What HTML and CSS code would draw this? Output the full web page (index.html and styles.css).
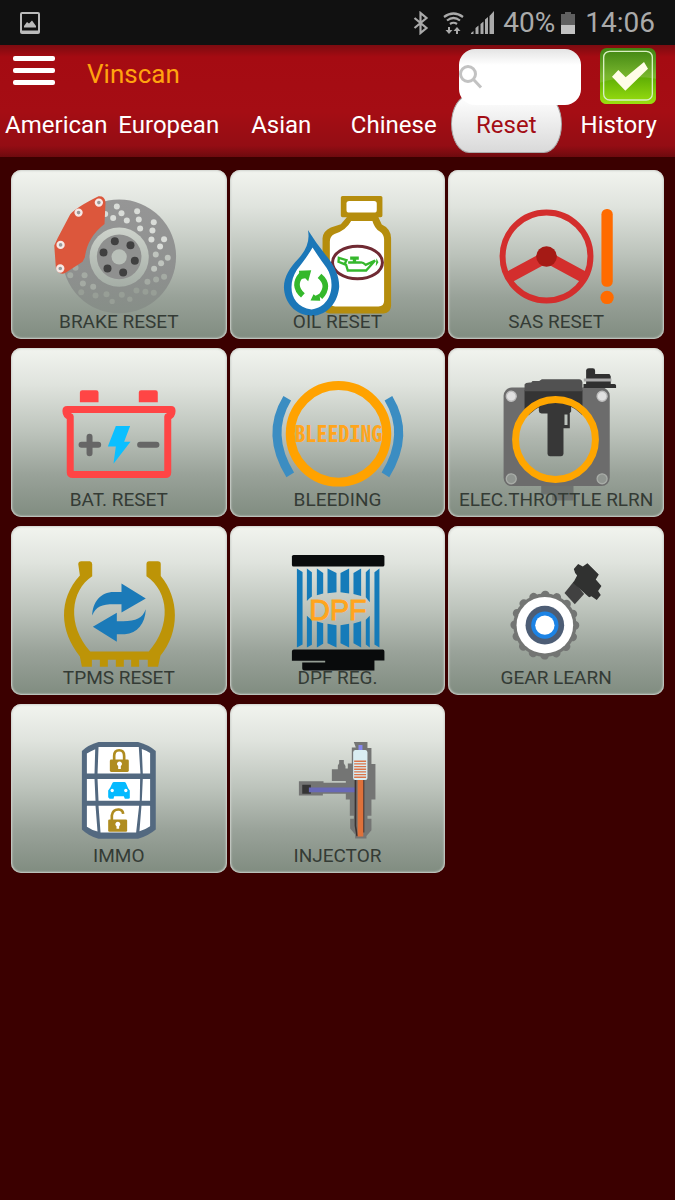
FILE: index.html
```html
<!DOCTYPE html>
<html lang="en">
<head>
<meta charset="utf-8">
<meta name="viewport" content="width=device-width, initial-scale=1">
<title>Vinscan</title>
<link rel="stylesheet" href="styles.css">
</head>
<body>
<div class="status">
  <svg class="status-photo" viewBox="0 0 20 22" aria-hidden="true"><rect x="1" y="1" width="18" height="20" rx="1" fill="none" stroke="#bbb" stroke-width="2"/><path d="M1 18.5h18V21H1z" fill="#bbb"/><path d="M4 15.500l0-1.500 3-4 2 1.500 3-3 4 5.500v1.500z" fill="#bbb"/></svg>
  <svg class="status-signals" viewBox="0 0 82 24" aria-hidden="true">
    <path d="M1.500 7l12 10-6 5V2l6 5-12 10" fill="none" stroke="#aaa" stroke-width="2.200"/>
    <g fill="none" stroke="#aaa" stroke-width="2.200"><path d="M31 6q9.500-7 19 0M34 9.500q6.500-5 13 0M37 13q3.500-2.500 7 0"/><path d="M36 16v5M44 23v-5" stroke-width="2"/></g>
    <path d="M32.500 19h7L36 23zM40.500 20h7L44 16z" fill="#aaa"/>
    <path d="M58 23v-1l2.500-2v3zM62.500 23v-6l3-2.500V23zM67.500 23V13l3-2.500V23zM72 23V8.500L75 6v17zM76.500 23V5L81 0v23z" fill="#aaa"/>
  </svg>
  <span>40%</span>
  <svg class="status-battery" viewBox="0 0 16 24" aria-hidden="true"><path d="M1 3h4V1h6v2h4v20H1z" fill="#606060"/><path d="M1 14h14v9H1z" fill="#c2c2c2"/></svg>
  <time>14:06</time>
</div>

<header class="header">
  <div class="toolbar">
    <button class="menu" type="button" aria-label="Menu"><span></span><span></span><span></span></button>
    <h1>Vinscan</h1>
    <label class="search">
      <svg viewBox="0 0 24 26" aria-hidden="true"><circle cx="9" cy="10" r="7.500" fill="none" stroke="#c2c2c2" stroke-width="3"/><path d="M14.500 15.500l7.500 8" stroke="#c2c2c2" stroke-width="3"/></svg>
      <input type="search" aria-label="Search">
    </label>
    <button class="confirm" type="button" aria-label="Confirm">
      <svg viewBox="0 0 168 168" aria-hidden="true">
        <defs><linearGradient id="ok" x2="0" y2="1"><stop offset="0" stop-color="#3f8411"/><stop offset=".5" stop-color="#78b52d"/><stop offset="1" stop-color="#8bd20c"/></linearGradient>
        <linearGradient id="ok-low" x2="0" y2="1"><stop offset="0" stop-color="#5fae05"/><stop offset="1" stop-color="#9be010"/></linearGradient></defs>
        <rect width="168" height="168" rx="20" fill="url(#ok)"/>
        <path d="M0 104Q80 80 168 92v56q0 20-20 20H20Q0 168 0 148z" fill="url(#ok-low)"/>
        <rect x="11" y="10" width="146" height="146" rx="18" fill="none" stroke="#d9efc3" stroke-width="4"/>
        <path d="M36 86l19-20 22 22 55-46 12 20-68 66z" fill="#fffde8"/>
      </svg>
    </button>
  </div>
  <nav class="tabs" aria-label="Vehicle groups">
    <button type="button">American</button>
    <button type="button">European</button>
    <button type="button">Asian</button>
    <button type="button">Chinese</button>
    <button type="button" class="active" aria-current="page">Reset</button>
    <button type="button">History</button>
  </nav>
</header>

<main class="grid">
  <button class="card" type="button">
    <svg viewBox="18 15 648 508" aria-hidden="true">
      <defs><linearGradient id="disc" x2="0" y2="1"><stop offset="0" stop-color="#969696"/><stop offset=".65" stop-color="#8e908f"/><stop offset="1" stop-color="#868e87"/></linearGradient>
      <linearGradient id="ring" x2="0" y2="1"><stop offset="0" stop-color="#ced3cc"/><stop offset="1" stop-color="#a5aea6"/></linearGradient></defs>
      <circle cx="343" cy="275" r="171" fill="url(#disc)"/>
      <circle cx="343" cy="277" r="89" fill="url(#ring)"/><circle cx="343" cy="276" r="67" fill="#8f908f"/><circle cx="343" cy="276" r="23" fill="#b9c0b9"/>
      <g fill="#404040"><circle cx="330" cy="229" r="12"/><circle cx="377" cy="241" r="12"/><circle cx="390" cy="288" r="12"/><circle cx="355" cy="323" r="12"/><circle cx="308" cy="311" r="12"/><circle cx="296" cy="263" r="12"/></g>
      <g fill="#d9dcd8"><circle cx="336" cy="125" r="9"/><circle cx="350" cy="145" r="9"/><circle cx="325" cy="159" r="9"/><circle cx="301" cy="147" r="9"/><circle cx="397" cy="139" r="9"/><circle cx="402" cy="164" r="9"/><circle cx="366" cy="167" r="9"/><circle cx="406" cy="191" r="9"/><circle cx="447" cy="172" r="9"/><circle cx="443" cy="197" r="9"/><circle cx="440" cy="224" r="9"/><circle cx="478" cy="223" r="9"/><circle cx="466" cy="245" r="9"/></g>
      <g fill="#bfc4be"><circle cx="453" cy="269" r="9"/><circle cx="489" cy="279" r="9"/><circle cx="469" cy="295" r="9"/><circle cx="448" cy="312" r="9"/></g>
      <g fill="#a4aaa3"><circle cx="478" cy="336" r="9"/><circle cx="454" cy="344" r="9"/><circle cx="428" cy="351" r="9"/><circle cx="212" cy="309" r="9"/><circle cx="196" cy="331" r="9"/><circle cx="239" cy="331" r="9"/><circle cx="234" cy="356" r="9"/><circle cx="265" cy="366" r="9"/></g>
      <g fill="#979e96"><circle cx="447" cy="384" r="9"/><circle cx="422" cy="381" r="9"/><circle cx="395" cy="377" r="9"/><circle cx="229" cy="382" r="9"/><circle cx="272" cy="392" r="9"/><circle cx="305" cy="388" r="9"/><circle cx="351" cy="390" r="9"/><circle cx="322" cy="410" r="8"/><circle cx="375" cy="403" r="8"/></g>
      <path d="M281 94q18-2 21 17l-3 66q-52 40-59 100l-7 14-51 33q-19 9-29-12l-5-70 10-22 38-72q20-22 85-54z" fill="#dc573c"/>
      <g fill="#999" stroke="#f5e8e5" stroke-width="7"><circle cx="282" cy="113" r="9"/><circle cx="221" cy="143" r="9"/><circle cx="167" cy="240" r="9"/><circle cx="166" cy="311" r="9"/></g>
    </svg>
    <span>BRAKE RESET</span>
  </button>

  <button class="card" type="button">
    <svg viewBox="6 15 648 508" aria-hidden="true">
      <path d="M344 93h115q5 0 5 5v54q0 5-5 5h-7l10 22q27 12 28 41v204q-2 22-22 22H306q-21 0-22-22V220q2-22 25-32l30-10 18-21h-13q-5 0-5-5V98q0-5 5-5z" fill="#b58d0d"/>
      <rect x="356" y="108" width="91" height="35" rx="8" fill="#fff"/>
      <path d="M370 168h64q6 22 22 32 13 9 13 24v184q0 17-17 17H322q-16 0-16-17V230q0-17 14-23 35-11 50-39z" fill="#fff"/>
      <ellipse cx="389" cy="293" rx="75" ry="49" fill="#fff" stroke="#702a33" stroke-width="9"/>
      <g fill="none" stroke="#35b82c" stroke-width="7"><path d="M333 279l23 7-6 12-18-7z"/><path d="M354 297l6 20h55l27-30-28 13q-10-9-17-7h-36"/><path d="M367 280h26M380 281v12" stroke-width="10"/></g><path d="M446 280l6 12-8 12z" fill="#35b82c"/>
      <path d="M240 195q26 42 62 86c20 28 33 55 32 86-4 43-33 85-83 86-49-2-82-40-83-86 0-32 19-60 42-84q40-42 30-88z" fill="#1b77b8"/>
      <path d="M254 248q20 31 42 61c28 40 19 117-45 125-64-8-74-73-44-119q33-42 47-67z" fill="#fff"/>
      <g fill="none" stroke="#35b82c" stroke-width="17"><path d="M225 392q-34-30-3-64M275 333q34 29 2 64"/></g>
      <path d="M213 318l37-2-9 33-9-9-15 3zM248 407l9-19 6 5 12-6 2 21z" fill="#35b82c"/>
    </svg>
    <span>OIL RESET</span>
  </button>

  <button class="card" type="button">
    <svg viewBox="7 15 648 508" aria-hidden="true">
      <circle cx="303" cy="275" r="132" fill="none" stroke="#d32e2d" stroke-width="18"/>
      <path d="M303 276l-111 60M303 276l111 60" stroke="#d32e2d" stroke-width="35"/>
      <circle cx="303" cy="275" r="31" fill="#a51a15"/>
      <rect x="468" y="132" width="34" height="234" rx="16" fill="#ff6b00"/><circle cx="485" cy="398" r="20" fill="#ff6b00"/>
    </svg>
    <span>SAS RESET</span>
  </button>

  <button class="card" type="button">
    <svg viewBox="18 8 648 508" aria-hidden="true">
      <path d="M225 171v-29q0-7 7-7h42q7 0 7 7v29zM402 171v-29q0-7 7-7h43q7 0 7 7v29z" fill="#ff4545"/>
      <path d="M187 193h312q3 0 3 4 0 13-13 17v167q0 7-7 7H204q-8 0-8-7V214q-13-4-13-17 0-4 4-4z" fill="none" stroke="#ff4545" stroke-width="21" stroke-linejoin="round"/>
      <path d="M230 299h50M254 275v49M406 299h49" stroke="#666" stroke-width="18" stroke-linecap="round"/>
      <path d="M333 242h43l-18 48h19l-51 66 7-52h-24z" fill="#0bbfff"/>
    </svg>
    <span>BAT. RESET</span>
  </button>

  <button class="card" type="button">
    <svg viewBox="6 8 648 508" aria-hidden="true">
      <circle cx="332" cy="266" r="145" fill="none" stroke="#ffa200" stroke-width="27"/>
      <path d="M178 159q-66 109 9 230M482 159q66 109-9 230" fill="none" stroke="#3b8dc2" stroke-width="27"/>
      <text class="bleeding-text" x="332" y="290">BLEEDING</text>
    </svg>
    <span>BLEEDING</span>
  </button>

  <button class="card" type="button">
    <svg viewBox="7 8 648 508" aria-hidden="true">
      <defs><linearGradient id="hole" x2="0" y2="1"><stop offset="0" stop-color="#cbd0ca"/><stop offset="1" stop-color="#919b91"/></linearGradient>
      <linearGradient id="hole-top" x2="0" y2="1"><stop offset="0" stop-color="#ced3cd"/><stop offset="1" stop-color="#aeb5ad"/></linearGradient></defs>
      <path d="M287 400h97v66h-64v-18h-33z" fill="#6d726f"/>
      <rect x="174" y="127" width="319" height="296" rx="25" fill="#6c6c6c"/>
      <circle cx="330" cy="283" r="120" fill="url(#hole)"/>
      <path d="M237 135h174v75H237z" fill="#343434"/><path d="M237 118q3-7 20-6l4-5h20l8-5h112q8 0 10 9v27H237z" fill="#515151"/>
      <path d="M414 116h8V75q1-6 8-6h12q7 0 7 7v10h43l4 7v23h11q5 0 5 5v7h-98z" fill="#303030"/><path d="M415 100h83v9h-83z" fill="#aaa"/>
      <path d="M221 283a109 109 0 0 1 218 0" fill="url(#hole-top)"/>
      <path d="M280 170h97v29l-5 6h1v44h-19v77q0 7-7 7h-34q-7 0-7-7V205h-18q-8-1-8-8z" fill="#373737"/><path d="M357 208h9v31h-9z" fill="#bcc3bd"/>
      <circle cx="330" cy="283" r="120" fill="none" stroke="#ffa600" stroke-width="21"/>
      <g fill="#e0e0e0" stroke="#bdbdbd" stroke-width="4"><circle cx="197" cy="153" r="15"/><circle cx="470" cy="153" r="15"/></g><g fill="#909590" stroke="#a8aca7" stroke-width="4"><circle cx="197" cy="401" r="15"/><circle cx="470" cy="401" r="15"/></g>
    </svg>
    <span>ELEC.THROTTLE RLRN</span>
  </button>

  <button class="card" type="button">
    <svg viewBox="18 9 648 508" aria-hidden="true">
      <path d="M220 123q1-8 9-8h26q7 1 7 9v36c-66 43-76 148-6 226h176c69-78 61-180-7-226v-36q0-9 8-9h26q9 0 9 8v36c56 67 58 168-1 240l-7 33h-31v-21h-26v21h-24v-21h-22v21h-24v-21h-24v21h-24v-21h-24v21h-30l-6-31c-61-76-66-171 0-243z" fill="#bd9407"/>
      <path d="M262 278c1-40 25-71 65-71h23v-25l73 45-73 42v-25h-22c-38 0-55 7-66 34zM423 259c-2 44-25 72-63 75h-24v23l-72-45 72-42v25h19c39 0 58-9 68-36z" fill="#1b7ab8"/>
    </svg>
    <span>TPMS RESET</span>
  </button>

  <button class="card" type="button">
    <svg viewBox="6 9 648 508" aria-hidden="true">
      <rect x="192" y="96" width="278" height="35" rx="5" fill="#090b0c"/>
      <path d="M192 386q0-6 6-6h267q5 0 5 6v27h-30v30H229q-6 0-6-6v-18h69v-5H192z" fill="#090b0c"/>
      <path d="M207 137l17 10v218l-17 9zM237 137l15 11v73q-8 5-15 13zM237 279l15 13v74l-15 8zM267 137l19 13v62l-19 5zM267 296l19 5v62l-19 11zM299 137l27 13v58l-27 3zM299 303l27 4v67l-27-13zM338 150l26-13v75l-26-4zM338 307l26-4v71l-26-13zM377 150l23-13v82l-23-6zM377 302l23-7v79l-23-13zM414 148l12-11v101l-12-15zM414 291l12-12v95l-12-9zM440 148l15-11v237l-15-9z" fill="#157bb9"/>
      <text class="dpf-text" x="330" y="291">DPF</text>
    </svg>
    <span>DPF REG.</span>
  </button>

  <button class="card" type="button">
    <svg viewBox="7 9 648 508" aria-hidden="true">
      <circle cx="298" cy="307" r="95" fill="#737573"/>
      <circle cx="298" cy="307" r="91" fill="none" stroke="#737573" stroke-width="25" stroke-linecap="round" stroke-dasharray="1 34.736"/>
      <circle cx="298" cy="307" r="85" fill="#fff"/><circle cx="298" cy="307" r="58" fill="#4d5d75"/><circle cx="298" cy="307" r="41" fill="#1c83e5"/><circle cx="298" cy="307" r="29" fill="#fff"/>
      <path d="M357 210l28-34 31 37-28 31z" fill="#414141"/><path d="M385 138l13-15 14 8 14-10 34 34-9 15 17 19-10 15 8 12-12 15-16-11-7 3-48-43 12-22-6-8z" fill="#303130"/>
    </svg>
    <span>GEAR LEARN</span>
  </button>

  <button class="card" type="button">
    <svg viewBox="18 12 648 508" aria-hidden="true">
      <path d="M231 153q18-18 50-27h119q33 9 53 27v236q-21 18-53 28H281q-31-9-50-28z" fill="#536980"/>
      <path d="M246 161q12-8 25-13l-2 73h-23zM281 141h121l5 80H278zM411 147q14 5 25 12v62h-22zM246 237h23l3 66h-26zM278 237h128l-1 66H281zM414 237h22v66h-25zM246 318h26l6 77q-18-4-32-14zM281 318h122l-9 80H287zM410 318h26v61q-16 11-32 15z" fill="#fff"/>
      <g fill="none" stroke="#af8c20" stroke-width="8"><path d="M328 183v-15q0-17 15-17t15 17v15M321 363v-16q3-19 21-18 12 1 13 13"/></g><rect x="315" y="179" width="57" height="37" rx="4" fill="#af8c20"/><rect x="310" y="359" width="57" height="37" rx="4" fill="#af8c20"/>
      <path d="M344 185a7 7 0 0 1 4 13v9h-8v-9a7 7 0 0 1 4-13zM339 366a7 7 0 0 1 4 13v8h-8v-8a7 7 0 0 1 4-13z" fill="#fff"/>
      <path d="M327 246h32q4 0 5 5l6 14 5 7v23l-4 2h-11l-3-8h-29l-2 8h-12l-4-5v-20l6-8 6-13q1-5 5-5z" fill="#05baff"/><circle cx="322" cy="272" r="5" fill="#fff"/><circle cx="363" cy="272" r="5" fill="#fff"/>
    </svg>
    <span>IMMO</span>
  </button>

  <button class="card" type="button">
    <svg viewBox="675 12 648 508" aria-hidden="true">
      <path d="M1047 126h41v18h12v48h12v107h-12v49H1088v9h12v34l-15 18v7h-34v-12l-15-18v-29h11v-9h-12v-49h-12v-17h-69v5h-72v-43h74v5h67v-6h-42v-35h18v-11l4-7v-10h14v10l5 8v8h7v-15h12v-48h12z" fill="#747574"/>
      <path d="M892 255h26v27h-26z" fill="#353535"/><path d="M912 270h140" stroke="#6869b7" stroke-width="14"/>
      <path d="M1052 238v140l5 31M1076 238v160" fill="none" stroke="#3a3333" stroke-width="5"/><path d="M1067 230v180" stroke="#df713a" stroke-width="17"/>
      <path d="M1045 158q0-8 6-8h31q6 0 6 8v76q0 6-6 6h-31q-6 0-6-6z" fill="#d9edf2"/><path d="M1061 135h12v15h-12z" fill="#8587ef"/>
      <path d="M1048 184h36M1048 192h36M1048 200h36M1048 208h36M1048 216h36M1048 224h36M1048 232h36" stroke="#dc7448" stroke-width="4"/>
    </svg>
    <span>INJECTOR</span>
  </button>
</main>
</body>
</html>
```
FILE: styles.css
```css
* { box-sizing: border-box; }

body {
  margin: 0;
  min-height: 100vh;
  background: #3b0000;
  font-family: Roboto, "Liberation Sans", sans-serif;
}

button {
  border: 0;
  padding: 0;
  background: none;
  font: inherit;
  cursor: pointer;
}

svg { display: block; }

.status {
  display: flex;
  align-items: center;
  gap: 6px;
  height: 45px;
  padding: 0 20px;
  background: #111;
  color: #aaa;
  font-size: 28px;
  line-height: 46px;
}

.status-photo { width: 20px; height: 22px; margin-right: auto; }
.status-signals { width: 82px; height: 24px; margin-right: 2px; }
.status-battery { width: 16px; height: 24px; margin: 0 3px 0 -1px; }

.header {
  background: linear-gradient(#7c0b10 0, #a50b12 12px, #a50d14 60%, #940d14 90%, #6e0a0e 100%);
  padding-bottom: 4px;
}

.toolbar {
  position: relative;
  z-index: 1;
  display: flex;
  align-items: flex-start;
  height: 50px;
  padding: 3px 19px 0 13px;
}

.menu {
  display: grid;
  gap: 7px;
  width: 42px;
  padding-top: 8px;
}

.menu span {
  height: 5px;
  border-radius: 2px;
  background: #fff;
}

.toolbar h1 {
  flex: 1;
  margin: 10px 0 0 32px;
  color: #ffa30f;
  font-size: 26px;
  line-height: 32px;
  font-weight: 400;
}

.search {
  display: flex;
  align-items: center;
  width: 122px;
  height: 56px;
  margin: 1px 19px 0 0;
  border-radius: 16px;
  background: linear-gradient(#e4e4e4, #fff 16px);
}

.search svg { flex: none; width: 24px; height: 26px; }

.search input {
  width: 100%;
  min-width: 0;
  border: 0;
  outline: 0;
  background: transparent;
  font: inherit;
  font-size: 20px;
}

.confirm svg { width: 56px; height: 56px; }

.tabs {
  display: grid;
  grid-template-columns: repeat(6, 1fr);
}

.tabs button {
  height: 58px;
  margin: 0 1px;
  padding-top: 2px;
  color: #fff;
  font-size: 24px;
  line-height: 56px;
}

.tabs .active {
  border: 1px solid #aaa;
  border-radius: 18px / 29px;
  background: linear-gradient(#fff, #d9d9d9);
  color: #a30d15;
  line-height: 54px;
}

.grid {
  display: grid;
  grid-template-columns: repeat(3, 1fr);
  gap: 9px 3px;
  padding: 13px 11px;
}

.card {
  display: grid;
  overflow: hidden;
  border-radius: 10px;
  background: linear-gradient(#f2f4ef, #dfe3dd 22%, #bcc3bb 50%, #99a299 75%, #808c80);
  box-shadow: inset 0 0 2px 1px #cfd2cd;
  color: #343b35;
}

.card svg {
  grid-area: 1 / 1;
  width: 100%;
  height: auto;
}

.card span {
  grid-area: 1 / 1;
  align-self: end;
  padding-bottom: 5px;
  font-size: 19px;
  line-height: 24px;
  white-space: nowrap;
}

.bleeding-text {
  fill: #ffa51c;
  font-family: "Noto Sans Mono CJK SC", "Liberation Mono", monospace;
  font-size: 66px;
  font-weight: 700;
  text-anchor: middle;
}

.dpf-text {
  fill: #ffa51c;
  stroke: #ffa51c;
  stroke-width: 3px;
  font-family: "Liberation Sans", sans-serif;
  font-size: 86px;
  text-anchor: middle;
}
```
